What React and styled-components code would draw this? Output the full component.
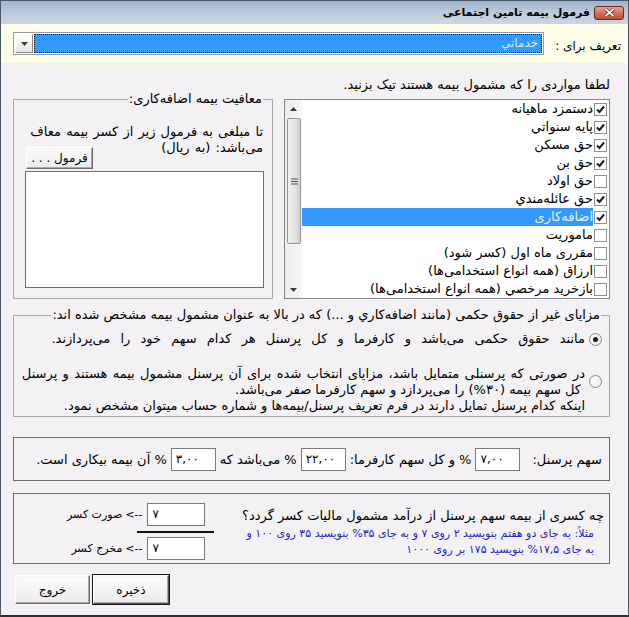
import React from 'react';
import styled, { createGlobalStyle, css } from 'styled-components';

const GlobalStyle = createGlobalStyle`
  html, body {
    margin: 0;
    padding: 0;
    background: #ffffff;
  }
  body {
    font-family: "DejaVu Sans", "Noto Sans", sans-serif;
    font-size: 13px;
    color: #000;
  }
`;

const Frame = styled.div`
  width: 629px;
  height: 617px;
  box-sizing: border-box;
  border: 1px solid #4a5766;
  border-bottom: 2px solid #2e3236;
  background: #f4f1f4;
  direction: rtl;
  display: flex;
  flex-direction: column;
  overflow: hidden;
`;

const TitleBar = styled.div`
  height: 23px;
  flex: none;
  display: flex;
  align-items: center;
  gap: 4px;
  padding-right: 4px;
  background: linear-gradient(#9fb3cb, #b9c8da 45%, #cad6e3);
`;

const CloseButton = styled.div`
  width: 30px;
  height: 14px;
  box-sizing: border-box;
  border: 1px solid #6d2a22;
  border-radius: 3px;
  background: linear-gradient(#e8a597, #d2715f 50%, #c2503b);
  display: flex;
  align-items: center;
  justify-content: center;
`;

const TitleText = styled.span`
  font-size: 11px;
  font-weight: bold;
  color: #000;
`;

const Header = styled.div`
  height: 39px;
  flex: none;
  display: flex;
  align-items: center;
  gap: 11px;
  padding: 0 7px 0 12px;
  background: #fdfde8;
`;

const HeaderLabel = styled.span`
  font-size: 12px;
  padding-top: 5px;
  white-space: nowrap;
`;

const Combo = styled.div`
  flex: 1;
  height: 23px;
  box-sizing: border-box;
  border: 1px solid #9c9c9c;
  display: flex;
  background: #fff;
  padding: 1px;
  gap: 1px;
`;

const ComboField = styled.div`
  flex: 1;
  background: #3399ff;
  outline: 1px dotted #202020;
  outline-offset: -1px;
  color: #d6eaff;
  font-size: 12px;
  line-height: 19px;
  padding-right: 4px;
`;

const ComboButton = styled.div`
  width: 18px;
  box-sizing: border-box;
  border: 1px solid;
  border-color: #ffffff #8a8a8a #8a8a8a #ffffff;
  background: linear-gradient(#ffffff, #e6e6e6);
  display: flex;
  align-items: center;
  justify-content: center;
`;

const Body = styled.div`
  flex: 1;
  display: flex;
  flex-direction: column;
  padding: 14px 18px 0 12px;
`;

const Instruction = styled.div`
  line-height: 16px;
  height: 16px;
`;

const TopRow = styled.div`
  display: flex;
  align-items: flex-start;
  gap: 11px;
`;

const ListBox = styled.div`
  width: 326px;
  height: 200px;
  margin-top: 6px;
  box-sizing: border-box;
  border: 1px solid #828790;
  background: #fff;
  display: flex;
  overflow: hidden;
`;

const ListItems = styled.div`
  flex: 1;
  display: flex;
  flex-direction: column;
  padding-right: 2px;
`;

const ListItem = styled.div`
  height: 18px;
  flex: none;
  display: flex;
  align-items: center;
  gap: 1px;
`;

const ItemText = styled.span`
  flex: 1;
  height: 18px;
  line-height: 18px;
  white-space: nowrap;
  ${(p) =>
    p.$selected &&
    css`
      background: #3399ff;
      color: #e4f1ff;
    `}
`;

const CheckBox = styled.span`
  width: 13px;
  height: 13px;
  flex: none;
  box-sizing: border-box;
  border: 1px solid #8e8f8f;
  background: #fff;
  display: flex;
  align-items: center;
  justify-content: center;
`;

const ScrollBar = styled.div`
  width: 17px;
  flex: none;
  display: flex;
  flex-direction: column;
  background: linear-gradient(90deg, #ececec, #f7f7f7);
`;

const ScrollArrow = styled.div`
  height: 17px;
  flex: none;
  display: flex;
  align-items: center;
  justify-content: center;
`;

const ScrollThumb = styled.div`
  height: 126px;
  margin: 1px 1px 0 2px;
  box-sizing: border-box;
  border: 1px solid #979797;
  border-radius: 2px;
  background: linear-gradient(90deg, #f2f2f2, #e2e2e2 60%, #cfcfcf);
  display: flex;
  align-items: center;
  justify-content: center;
`;

const ScrollTrack = styled.div`
  flex: 1;
`;

const Group = styled.fieldset`
  margin: 0;
  box-sizing: border-box;
  border: 1px solid #a9a9a9;
  padding: ${(p) => p.$pad || '0'};
  height: ${(p) => p.$height}px;
  min-width: 0;
  display: flex;
  flex-direction: column;
  ${(p) => p.$flex && 'flex: 1;'}
  ${(p) => p.$top && `margin-top: ${p.$top}px;`}
`;

const Legend = styled.legend`
  padding: 0 1px;
  margin-right: 1px;
  line-height: 12px;
  white-space: nowrap;
`;

const ExemptLabel = styled.div`
  margin-top: 19px;
  padding-right: 1px;
  line-height: 16px;
  word-spacing: 1px;
  white-space: nowrap;
`;

const WinButton = styled.button`
  box-sizing: border-box;
  width: ${(p) => p.$w}px;
  height: ${(p) => p.$h}px;
  font-family: inherit;
  font-size: 12px;
  padding: 0;
  color: #000;
  background: linear-gradient(#fbfbfb, #ececec);
  border: 1px solid;
  border-color: #ffffff #6a6a6a #6a6a6a #ffffff;
  box-shadow: inset -1px -1px 0 #a8a8a8, inset 1px 1px 0 #f4f4f4;
  ${(p) =>
    p.$default &&
    css`
      outline: 1px solid #1a1a1a;
      outline-offset: 0;
      border-color: #ffffff #505050 #505050 #ffffff;
    `}
`;

const FormulaButton = styled(WinButton)`
  align-self: flex-end;
  margin-top: -9px;
  margin-left: 1px;
`;

const FormulaArea = styled.div`
  margin-top: 2px;
  height: 117px;
  box-sizing: border-box;
  border: 1px solid #6e6e6e;
  background: #fff;
`;

const Option = styled.div`
  display: flex;
  align-items: flex-start;
  gap: 4px;
  margin-top: ${(p) => p.$top}px;
`;

const Radio = styled.span`
  width: 13px;
  height: 13px;
  flex: none;
  box-sizing: border-box;
  border: 1px solid #8a8a8a;
  border-radius: 50%;
  background: radial-gradient(circle at 40% 40%, #ffffff, #e4e4e4);
  display: flex;
  align-items: center;
  justify-content: center;
  margin-top: ${(p) => p.$offset || 0}px;
  &::after {
    content: '';
    width: 5px;
    height: 5px;
    border-radius: 50%;
    background: ${(p) => (p.$on ? '#1e1e1e' : 'transparent')};
  }
`;

const OptionText = styled.div`
  display: flex;
  flex-direction: column;
`;

const OptionLine = styled.div`
  line-height: 16px;
  white-space: nowrap;
  word-spacing: ${(p) => p.$ws || 0}px;
  ${(p) => p.$indent && `padding-right: ${p.$indent}px;`}
`;

const Box = styled.div`
  box-sizing: border-box;
  border: 1px solid #6b6b6b;
  height: ${(p) => p.$height}px;
  margin-top: ${(p) => p.$top}px;
`;

const ShareRow = styled(Box)`
  display: flex;
  align-items: center;
  padding-right: 7px;
  gap: 4px;
`;

const Text = styled.span`
  white-space: nowrap;
  ${(p) => p.$after && `margin-left: ${p.$after}px;`}
`;

const NumInput = styled.div`
  width: ${(p) => p.$w || 45}px;
  height: 23px;
  box-sizing: border-box;
  border: 1px solid #7a7a7a;
  background: #fff;
  direction: ltr;
  text-align: left;
  padding-left: 4px;
  line-height: 21px;
  font-size: 12px;
`;

const TaxBox = styled(Box)`
  display: flex;
  padding: 0 5px 0 0;
  gap: 8px;
`;

const TaxText = styled.div`
  flex: 1;
  display: flex;
  flex-direction: column;
  padding-top: 14px;
`;

const Question = styled.div`
  line-height: 16px;
  white-space: nowrap;
`;

const Hint = styled.div`
  color: #2323c4;
  font-size: 11px;
  line-height: 16px;
  padding-right: 10px;
  margin-top: 2px;
  white-space: nowrap;
`;

const Fraction = styled.div`
  display: grid;
  grid-template-columns: auto auto;
  grid-template-rows: 23px 11px 23px;
  align-items: center;
  column-gap: 5px;
  padding-top: 9px;
  margin-left: 53px;
`;

const FractionLine = styled.div`
  grid-column: 1;
  height: 2px;
  background: #111;
  margin: 0 -9px 0 -10px;
`;

const FractionLabel = styled.span`
  font-size: 11px;
  white-space: nowrap;
`;

const Arrow = styled.span`
  direction: ltr;
  unicode-bidi: isolate;
  margin-left: 3px;
`;

const ButtonRow = styled.div`
  display: flex;
  justify-content: flex-end;
  gap: 3px;
  margin-top: 11px;
  padding-left: 2px;
`;

const items = [
  { label: 'دستمزد ماهیانه', checked: true },
  { label: 'پایه سنواتي', checked: true },
  { label: 'حق مسکن', checked: true },
  { label: 'حق بن', checked: true },
  { label: 'حق اولاد', checked: false },
  { label: 'حق عائله‌مندي', checked: true },
  { label: 'اضافه‌کاری', checked: true, selected: true },
  { label: 'ماموریت', checked: false },
  { label: 'مقرری ماه اول (کسر شود)', checked: false },
  { label: 'ارزاق (همه انواع استخدامی‌ها)', checked: false },
  { label: 'بازخرید مرخصي (همه انواع استخدامی‌ها)', checked: false },
];

const CheckMark = () => (
  <svg width="9" height="9" viewBox="0 0 9 9">
    <path d="M1 4.5 L3.5 7 L8 1.5" fill="none" stroke="#1b1b1b" strokeWidth="2" />
  </svg>
);

const Triangle = ({ up }) => (
  <svg width="7" height="4" viewBox="0 0 7 4">
    <path d={up ? 'M0 4 L3.5 0 L7 4 Z' : 'M0 0 L3.5 4 L7 0 Z'} fill="#3a3a3a" />
  </svg>
);

export default function App() {
  return (
    <>
      <GlobalStyle />
      <Frame>
        <TitleBar>
          <CloseButton>
            <svg width="11" height="9" viewBox="0 0 11 9">
              <path d="M1.5 1 L9.5 8 M9.5 1 L1.5 8" stroke="#5a1a12" strokeWidth="3.2" />
              <path d="M1.5 1 L9.5 8 M9.5 1 L1.5 8" stroke="#ffffff" strokeWidth="1.8" />
            </svg>
          </CloseButton>
          <TitleText>فرمول بیمه تامین اجتماعی</TitleText>
        </TitleBar>

        <Header>
          <HeaderLabel>تعریف برای :</HeaderLabel>
          <Combo>
            <ComboField>خدماتي</ComboField>
            <ComboButton>
              <Triangle />
            </ComboButton>
          </Combo>
        </Header>

        <Body>
          <Instruction>لطفا مواردی را که مشمول بیمه هستند تیک بزنید.</Instruction>
          <TopRow>
            <ListBox>
              <ListItems>
                {items.map((it) => (
                  <ListItem key={it.label}>
                    <CheckBox>{it.checked && <CheckMark />}</CheckBox>
                    <ItemText $selected={it.selected}>{it.label}</ItemText>
                  </ListItem>
                ))}
              </ListItems>
              <ScrollBar>
                <ScrollArrow>
                  <Triangle up />
                </ScrollArrow>
                <ScrollThumb>
                  <svg width="7" height="7" viewBox="0 0 7 7">
                    <path d="M0 1 H7 M0 3.5 H7 M0 6 H7" stroke="#555" strokeWidth="1" />
                  </svg>
                </ScrollThumb>
                <ScrollTrack />
                <ScrollArrow>
                  <Triangle />
                </ScrollArrow>
              </ScrollBar>
            </ListBox>

            <Group $flex $height={206} $pad="0 8px 0 11px">
              <Legend>معافیت بیمه اضافه‌کاری:</Legend>
              <ExemptLabel>
                تا مبلغی به فرمول زیر از کسر بیمه معاف
                <br />
                می‌باشد: (به ریال)
              </ExemptLabel>
              <FormulaButton $w={67} $h={22}>فرمول . . .</FormulaButton>
              <FormulaArea />
            </Group>
          </TopRow>

          <Group $height={108} $top={10} $pad="0 7px 0 8px">
            <Legend>مزایای غیر از حقوق حکمی (مانند اضافه‌کاري و ...) که در بالا به عنوان مشمول بیمه مشخص شده اند:</Legend>
            <Option $top={10}>
              <Radio $on $offset={2} />
              <OptionText>
                <OptionLine $ws={6}>مانند حقوق حکمی می‌باشد و کارفرما و کل پرسنل هر کدام سهم خود را می‌پردازند.</OptionLine>
              </OptionText>
            </Option>
            <Option $top={19}>
              <Radio $offset={9} />
              <OptionText>
                <OptionLine $ws={1.2}>در صورتی که پرسنلی متمایل باشد، مزایای انتخاب شده برای آن پرسنل مشمول بیمه هستند و پرسنل</OptionLine>
                <OptionLine $indent={4}>کل سهم بیمه (۳۰%) را می‌پردازد و سهم کارفرما صفر می‌باشد.</OptionLine>
                <OptionLine>اینکه کدام پرسنل تمایل دارند در فرم تعریف پرسنل/بیمه‌ها و شماره حساب میتوان مشخص نمود.</OptionLine>
              </OptionText>
            </Option>
          </Group>

          <ShareRow $height={44} $top={20}>
            <Text $after={8}>سهم پرسنل:</Text>
            <NumInput>۷,۰۰</NumInput>
            <Text>% و کل سهم کارفرما:</Text>
            <NumInput>۲۲,۰۰</NumInput>
            <Text>% می‌باشد که</Text>
            <NumInput>۳,۰۰</NumInput>
            <Text>% آن بیمه بیکاری است.</Text>
          </ShareRow>

          <TaxBox $height={71} $top={12}>
            <TaxText>
              <Question>چه کسری از بیمه سهم پرسنل از درآمد مشمول مالیات کسر گردد؟</Question>
              <Hint>
                مثلاً: به جای دو هفتم بنویسید ۲ روی ۷ و به جای ۳۵% بنویسید ۳۵ روی ۱۰۰ و
                <br />
                به جای ۱۷,۵% بنویسید ۱۷۵ بر روی ۱۰۰۰
              </Hint>
            </TaxText>
            <Fraction>
              <NumInput $w={58}>۷</NumInput>
              <FractionLabel>
                <Arrow>&lt;--</Arrow>صورت کسر
              </FractionLabel>
              <FractionLine />
              <span />
              <NumInput $w={58}>۷</NumInput>
              <FractionLabel>
                <Arrow>&lt;--</Arrow>مخرج کسر
              </FractionLabel>
            </Fraction>
          </TaxBox>

          <ButtonRow>
            <WinButton $w={76} $h={29} $default>ذخیره</WinButton>
            <WinButton $w={75} $h={29}>خروج</WinButton>
          </ButtonRow>
        </Body>
      </Frame>
    </>
  );
}
